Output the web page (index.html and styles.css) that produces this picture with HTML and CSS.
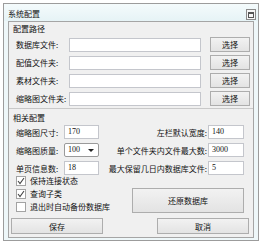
FILE: index.html
```html
<!DOCTYPE html>
<html lang="zh-CN">
<head>
<meta charset="UTF-8">
<title>系统配置</title>
<link rel="stylesheet" href="styles.css">
</head>
<body>
  <div class="window">
    <div class="titlebar">
      <span class="title">系统配置</span>
      <span class="sysbtn"><i></i></span>
    </div>
    <div class="client">
      <div class="group paths">
        <div class="group-title">配置路径</div>
        <div class="path-row">
          <span class="label">数据库文件:</span>
          <div class="field path"></div>
          <div class="btn pick">选择</div>
        </div>
        <div class="path-row">
          <span class="label">配值文件夹:</span>
          <div class="field path"></div>
          <div class="btn pick">选择</div>
        </div>
        <div class="path-row">
          <span class="label">素材文件夹:</span>
          <div class="field path"></div>
          <div class="btn pick">选择</div>
        </div>
        <div class="path-row">
          <span class="label">缩略图文件夹:</span>
          <div class="field path"></div>
          <div class="btn pick">选择</div>
        </div>
      </div>

      <div class="group settings">
        <div class="group-title">相关配置</div>
        <div class="set-row">
          <span class="label short">缩略图尺寸:</span>
          <div class="field small">170</div>
          <span class="label right">左栏默认宽度:</span>
          <div class="field small">140</div>
        </div>
        <div class="set-row">
          <span class="label short">缩略图质量:</span>
          <div class="field small combo">100<span class="arrow"></span></div>
          <span class="label right">单个文件夹内文件最大数:</span>
          <div class="field small">3000</div>
        </div>
        <div class="set-row">
          <span class="label short">单页信息数:</span>
          <div class="field small">18</div>
          <span class="label right">最大保留几日内数据库文件:</span>
          <div class="field small">5</div>
        </div>

        <div class="lower">
          <div class="checks">
            <div class="check"><span class="box on"><svg width="8" height="8" viewBox="0 0 8 8"><path d="M1 4 L3 6.5 L7 1" fill="none" stroke="#444" stroke-width="1.1"/></svg></span>保持连接状态</div>
            <div class="check"><span class="box on"><svg width="8" height="8" viewBox="0 0 8 8"><path d="M1 4 L3 6.5 L7 1" fill="none" stroke="#444" stroke-width="1.1"/></svg></span>查询子类</div>
            <div class="check"><span class="box"></span>退出时自动备份数据库</div>
          </div>
          <div class="btn restore">还原数据库</div>
        </div>
      </div>

      <div class="footer">
        <div class="btn wide">保存</div>
        <div class="btn wide">取消</div>
      </div>
    </div>
  </div>
</body>
</html>
```

FILE: styles.css
```css
body {
  margin: 0;
  background: #ffffff;
  font-family: "Noto Sans CJK SC", "Liberation Sans", sans-serif;
  font-size: 8px;
  color: #111;
}

.window {
  margin: 3px 0 0 3px;
  width: 254px;
  height: 236px;
  border: 1px solid #9c9c9c;
  background: #eef7f9;
  display: flex;
  flex-direction: column;
}

.titlebar {
  height: 17px;
  display: flex;
  align-items: center;
  justify-content: space-between;
  padding: 0 2px 0 4px;
  background: linear-gradient(#f4fbfc, #e6f3f6);
}

.title {
  line-height: 11px;
  margin-top: 2px;
}

.sysbtn {
  width: 8px;
  height: 9px;
  border: 1px solid #8a8a8a;
  background: #f6f6f6;
  display: flex;
  align-items: center;
  justify-content: center;
  margin-top: 4px;
}

.sysbtn i {
  width: 4px;
  height: 3px;
  border: 1px solid #555;
  border-top-width: 2px;
}

.client {
  flex: 1;
  margin: 0 4px 2px 4px;
  border: 1px solid #a5a5a5;
  background: #f0f0f0;
  display: flex;
  flex-direction: column;
}

.group-title {
  line-height: 11px;
  height: 11px;
  padding-left: 4px;
}

.paths {
  padding-top: 1px;
  height: 85px;
}

.path-row {
  display: flex;
  align-items: center;
  height: 15px;
  margin-top: 3px;
  padding-left: 7px;
}

.label {
  line-height: 11px;
  white-space: nowrap;
}

.path-row .label {
  width: 53px;
}

.field {
  height: 12px;
  border: 1px solid #c4c6cc;
  background: #ffffff;
  line-height: 12px;
  padding-left: 3px;
  font-family: "Liberation Serif", serif;
  font-size: 8px;
}

.field.path {
  width: 127px;
}

.btn {
  border: 1px solid #adadad;
  background: linear-gradient(#f2f2f2, #e3e3e3);
  text-align: center;
  line-height: 11px;
  display: flex;
  align-items: center;
  justify-content: center;
}

.btn.pick {
  width: 38px;
  height: 13px;
  margin-left: 9px;
}

.settings {
  border-top: 1px solid #c9c9c9;
  padding-top: 3px;
}

.set-row {
  display: flex;
  align-items: center;
  height: 14px;
  margin-top: 4px;
  padding-left: 7px;
}

.settings .group-title + .set-row {
  margin-top: 2px;
}

.label.short {
  width: 48px;
}

.field.small {
  width: 30px;
}

.label.right {
  flex: 1;
  text-align: right;
}

.set-row .field.small:last-child {
  width: 31px;
  margin-right: 9px;
  margin-left: 1px;
}

.combo {
  border-radius: 2px;
  border-color: #9a9a9a;
  position: relative;
}

.arrow {
  position: absolute;
  right: 4px;
  top: 5px;
  border-left: 3px solid transparent;
  border-right: 3px solid transparent;
  border-top: 3px solid #222;
}

.lower {
  display: flex;
  margin-top: -1px;
  padding-left: 7px;
}

.checks {
  width: 116px;
}

.check {
  display: flex;
  align-items: center;
  height: 13px;
  line-height: 11px;
}

.box {
  width: 8px;
  height: 8px;
  border: 1px solid #a3a3a3;
  background: #ffffff;
  margin-right: 4px;
  display: flex;
  align-items: center;
  justify-content: center;
}

.btn.restore {
  width: 110px;
  height: 23px;
  margin-top: 14px;
}

.footer {
  margin-top: auto;
  display: flex;
  justify-content: space-between;
  padding: 0 4px 3px 2px;
}

.btn.wide {
  width: 90px;
  height: 14px;
}
```
